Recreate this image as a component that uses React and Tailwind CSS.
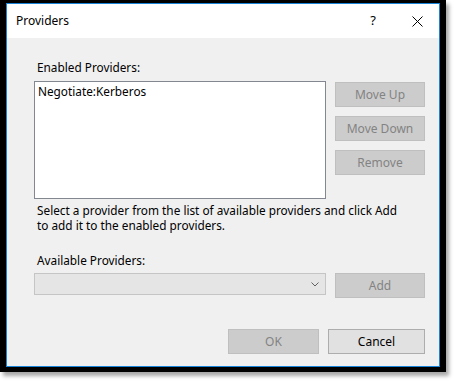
import React from 'react';

const font = { fontFamily: '"Noto Sans", "Liberation Sans", sans-serif' };

const DisabledButton = ({ children, className = '' }) => (
  <div
    className={`flex h-[25px] w-[90px] items-center justify-center border border-[#bfbfbf] bg-[#cccccc] text-[12px] text-[#838383] ${className}`}
  >
    {children}
  </div>
);

export default function App() {
  return (
    <div className="h-[381px] w-[454px] bg-white" style={font}>
      {/* black highlight frame around the captured window */}
      <div className="w-[446px] bg-black pb-[5px] pl-[6px] pr-[6px] pt-[3px] shadow-[3px_4px_4px_rgba(0,0,0,0.35)]">
        <div className="flex h-[364px] w-[434px] flex-col border border-[#1883d7] bg-[#f0f0f0]">
          {/* title bar */}
          <div className="flex h-[34px] items-center bg-white pl-[9px] text-[12px] text-black">
            <span className="flex-1">Providers</span>
            <span className="mr-[36px] text-[13px]">?</span>
            <svg width="11" height="11" viewBox="0 0 11 11" className="mr-[16px]">
              <path d="M0.5 0.5 L10.5 10.5 M10.5 0.5 L0.5 10.5" stroke="#000" strokeWidth="1" />
            </svg>
          </div>

          {/* body */}
          <div className="flex flex-1 flex-col pl-[27px] pr-[14px] text-[11.8px] leading-[15px] text-black">
            <div className="mt-[22px] pl-[3px]">Enabled Providers:</div>
            <div className="mt-[6px] flex">
              <div className="h-[118px] w-[292px] border border-[#828790] bg-white px-[3px] pt-[2px]">
                Negotiate:Kerberos
              </div>
              <div className="ml-[9px] mt-[1px] flex flex-col gap-[9px]">
                <DisabledButton>Move Up</DisabledButton>
                <DisabledButton>Move Down</DisabledButton>
                <DisabledButton>Remove</DisabledButton>
              </div>
            </div>

            <div className="mt-[4px] pl-[3px]">
              <div>Select a provider from the list of available providers and click Add</div>
              <div>to add it to the enabled providers.</div>
            </div>

            <div className="mt-[20px] pl-[3px]">Available Providers:</div>
            <div className="mt-[5px] flex items-start">
              <div className="flex h-[22px] w-[292px] items-center justify-end border border-[#c5c5c5] bg-[#e5e5e5] pr-[6px]">
                <svg width="8" height="5" viewBox="0 0 8 5">
                  <path d="M0.5 0.5 L4 4 L7.5 0.5" stroke="#606060" fill="none" strokeWidth="1" />
                </svg>
              </div>
              <DisabledButton className="ml-[9px]">Add</DisabledButton>
            </div>

            <div className="mt-auto mb-[12px] flex justify-end gap-[9px]">
              <DisabledButton className="w-[91px]">OK</DisabledButton>
              <div className="flex h-[25px] w-[97px] items-center justify-center border border-[#adadad] bg-[#e1e1e1] text-[12px] text-black">
                Cancel
              </div>
            </div>
          </div>
        </div>
      </div>
    </div>
  );
}
